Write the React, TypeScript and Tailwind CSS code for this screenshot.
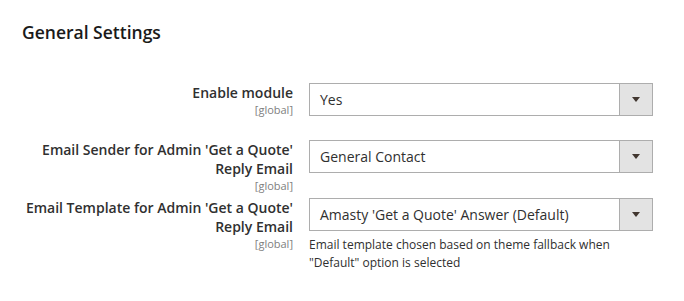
import React from "react";

interface Field {
  label: string[];
  value: string;
  note?: string[];
  mt: string;
}

const FIELDS: Field[] = [
  { label: ["Enable module"], value: "Yes", mt: "mt-[39px]" },
  { label: ["Email Sender for Admin 'Get a Quote'", "Reply Email"], value: "General Contact", mt: "mt-[24px]" },
  {
    label: ["Email Template for Admin 'Get a Quote'", "Reply Email"],
    value: "Amasty 'Get a Quote' Answer (Default)",
    note: ["Email template chosen based on theme fallback when", "\"Default\" option is selected"],
    mt: "mt-[6px]",
  },
];

function Select({ value }: { value: string }) {
  return (
    <div className="flex h-[33px] w-[344px] border border-[#adadad] bg-white">
      <div className="flex-1 flex items-center pl-[10px] text-[14px] text-[#303030]">{value}</div>
      <div className="w-[33px] flex items-center justify-center bg-[#e3e3e3] border-l border-[#adadad]">
        <svg width="8" height="5" viewBox="0 0 8 5">
          <path d="M0 0 H8 L4 5 Z" fill="#41362f" />
        </svg>
      </div>
    </div>
  );
}

export default function App() {
  return (
    <div className="w-[684px] h-[301px] bg-white pl-[22px] pt-[20px] font-['Open_Sans',sans-serif] text-[#303030]">
      <h2 className="text-[17.5px] font-semibold leading-[24px] text-[#1a1a1a]">General Settings</h2>

      {FIELDS.map((f, i) => (
        <div key={i} className={`flex gap-[16px] ${f.mt}`}>
          <div className="w-[271px] text-right">
            {f.label.map((l) => (
              <div key={l} className="text-[14px] font-semibold leading-[19px]">{l}</div>
            ))}
            <div className="text-[11px] leading-[13px] mt-[1px] text-[#808080]">[global]</div>
          </div>
          <div>
            <Select value={f.value} />
            {f.note && (
              <div className="mt-[5px] text-[12px] leading-[18px] text-[#303030]">
                {f.note.map((n) => (
                  <div key={n}>{n}</div>
                ))}
              </div>
            )}
          </div>
        </div>
      ))}
    </div>
  );
}
